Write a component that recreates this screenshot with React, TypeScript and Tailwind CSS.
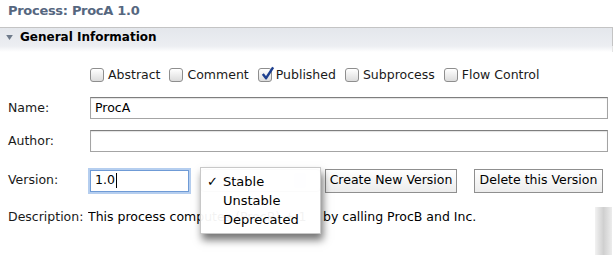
import React from "react";

const Checkbox = ({ checked }: { checked?: boolean }) => (
  <span className="relative inline-flex h-[14px] w-[14px] items-center justify-center rounded-[3px] border border-[#8e8e8e] bg-gradient-to-b from-white to-[#dcdcdc] shadow-[inset_0_1px_0_#fff]">
    {checked && (
      <svg viewBox="0 0 16 16" className="absolute -top-[3px] left-[1px] h-[15px] w-[15px]">
        <path d="M3 8.5 L6.5 13 L14 1.5" fill="none" stroke="#1d3f8f" strokeWidth="2.6" strokeLinejoin="round" />
      </svg>
    )}
  </span>
);

const CheckItem = ({ label, checked }: { label: string; checked?: boolean }) => (
  <label className="flex items-center gap-[4px]">
    <Checkbox checked={checked} />
    <span>{label}</span>
  </label>
);

const Field = ({ label, value }: { label: string; value?: string }) => (
  <div className="flex h-[22px] items-center">
    <span className="w-[90px] pl-[8px]">{label}</span>
    <div className="flex h-[22px] w-[518px] items-center border border-[#a4a4a4] border-t-[#7e7e7e] bg-white pl-[4px] text-black shadow-[inset_0_1px_1px_rgba(0,0,0,0.12)]">
      {value}
    </div>
  </div>
);

const Button = ({ children, w }: { children: React.ReactNode; w: string }) => (
  <div className={`flex h-[24px] ${w} items-center justify-center border border-[#8f8f8f] bg-gradient-to-b from-white to-[#ececec] text-black`}>
    {children}
  </div>
);

export default function App() {
  return (
    <div className="relative h-[255px] w-[615px] overflow-hidden bg-white text-[12.5px] text-[#1a1a1a]" style={{ fontFamily: '"DejaVu Sans", "Liberation Sans", sans-serif' }}>
      {/* title */}
      <div className="h-[27px] pl-[8px] pt-[2px] text-[13px] font-bold leading-[18px] tracking-[-0.3px] text-[#56677f]">Process: ProcA 1.0</div>

      {/* section header */}
      <div className="flex h-[19px] w-[613px] items-center border-t border-r border-[#c4c4c4] bg-gradient-to-b from-[#e4e7ec] to-[#eceef2] pl-[6px] text-[12px] font-bold text-black">
        <svg viewBox="0 0 8 6" className="mr-[7px] h-[5px] w-[7px]">
          <path d="M0 0 H8 L4 6 Z" fill="#6e7a8a" />
        </svg>
        General Information
      </div>
      <div className="h-[6px] w-[613px] border-r border-[#e4e4e4] bg-gradient-to-b from-[#eceef2] to-white" />

      {/* flags */}
      <div className="mt-[15px] flex h-[16px] items-center gap-[9px] pl-[90px]">
        <CheckItem label="Abstract" />
        <CheckItem label="Comment" />
        <CheckItem label="Published" checked />
        <CheckItem label="Subprocess" />
        <CheckItem label="Flow Control" />
      </div>

      <div className="mt-[14px]">
        <Field label="Name:" value="ProcA" />
      </div>
      <div className="mt-[11px]">
        <Field label="Author:" />
      </div>

      {/* version row */}
      <div className="mt-[16px] flex h-[25px] items-center">
        <span className="w-[90px] pl-[8px]">Version:</span>
        <div className="flex h-[22px] w-[99px] items-center border border-[#6f9bd6] bg-white pl-[4px] text-black shadow-[0_0_0_2px_rgba(120,165,225,0.55)]">
          1.0<span className="ml-[1px] h-[15px] w-[1px] bg-black" />
        </div>
        <div className="ml-[11px] flex h-[23px] w-[121px] items-center justify-end rounded-[4px] border border-[#b0b0b0] bg-[#f4f4f4] pr-[14px]">
          <span className="h-[15px] w-[12px] rounded-[3px] bg-[#dde6f2]" />
        </div>
        <div className="ml-[4px]">
          <Button w="w-[132px]">Create New Version</Button>
        </div>
        <div className="ml-[17px]">
          <Button w="w-[129px]">Delete this Version</Button>
        </div>
      </div>

      {/* description */}
      <div className="mt-[14px] flex items-start text-[12.5px] text-black">
        <span className="w-[88px] pl-[8px] pt-[1px] text-[#1a1a1a]">Description:</span>
        <span className="w-[235px] overflow-hidden whitespace-nowrap pt-[1px]">This process computes (ProcB) + 1</span>
        <span className="pt-[1px]">by calling ProcB and Inc.</span>
        <div className="ml-auto mr-[3px] h-[48px] w-[17px] bg-gradient-to-r from-[#f2f2f2] via-[#d0d0d0] to-[#ececec]" />
      </div>

      {/* open popup menu */}
      <div className="absolute left-[200px] top-[167px] w-[121px] border border-[#c8c8c8] bg-white/95 py-[4px] text-[13px] leading-[19px] text-black shadow-[2px_6px_8px_rgba(0,0,0,0.55)]">
        <div className="flex items-center">
          <span className="w-[22px] pl-[6px]">✓</span>Stable
        </div>
        <div className="pl-[22px]">Unstable</div>
        <div className="pl-[22px]">Deprecated</div>
      </div>
    </div>
  );
}
